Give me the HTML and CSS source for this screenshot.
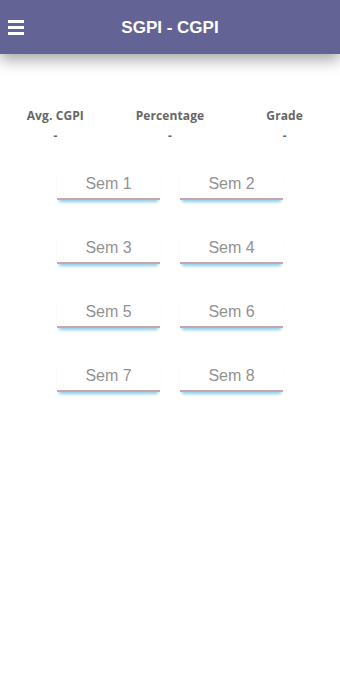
FILE: index.html
```html
<!DOCTYPE html>
<html>
<head>
<meta charset="utf-8">
<link rel="stylesheet" href="styles.css">
</head>
<body>
<header class="bar">
  <div class="menu">
    <svg width="16" height="17" viewBox="0 0 16 17">
      <rect x="0" y="1" width="16" height="3" fill="#fff"/>
      <rect x="0" y="7" width="16" height="3" fill="#fff"/>
      <rect x="0" y="13" width="16" height="3" fill="#fff"/>
    </svg>
  </div>
  <div class="title">SGPI - CGPI</div>
</header>
<section class="stats">
  <div class="stat"><div class="label">Avg. CGPI</div><div class="val">-</div></div>
  <div class="stat"><div class="label">Percentage</div><div class="val">-</div></div>
  <div class="stat"><div class="label">Grade</div><div class="val">-</div></div>
</section>
<section class="grid">
  <button class="sem">Sem 1</button>
  <button class="sem">Sem 2</button>
  <button class="sem">Sem 3</button>
  <button class="sem">Sem 4</button>
  <button class="sem">Sem 5</button>
  <button class="sem">Sem 6</button>
  <button class="sem">Sem 7</button>
  <button class="sem">Sem 8</button>
</section>
</body>
</html>
```
FILE: styles.css
```css
html, body { margin: 0; padding: 0; background: #fff; }
body { font-family: "Liberation Sans", Arial, sans-serif; width: 340px; height: 680px; overflow: hidden; }
.bar {
  height: 54px;
  background: #646395;
  display: flex;
  align-items: center;
  position: relative;
  box-shadow: 0 6px 14px rgba(0,0,0,0.35);
}
.menu { width: 16px; height: 17px; margin-left: 8px; margin-top: 1px; }
.menu svg { display: block; }
.title {
  position: absolute;
  left: 0; right: 0;
  text-align: center;
  color: #fff;
  font-weight: bold;
  font-size: 17px;
  top: 18px;
}
.stats {
  display: grid;
  grid-template-columns: repeat(3, 1fr);
  padding-top: 54px;
  margin: 0 -2px;
}
.stat { text-align: center; color: #666; }
.label { font-family: "Open Sans", sans-serif; font-weight: 700; font-size: 12px; line-height: 15px; letter-spacing: 0.1px; }
.val { font-family: "Open Sans", sans-serif; font-weight: 700; font-size: 12px; line-height: 12px; margin-top: 7px; }
.grid {
  display: grid;
  grid-template-columns: 103px 103px;
  column-gap: 20px;
  row-gap: 34px;
  justify-content: center;
  padding-top: 28px;
}
.sem {
  height: 30px;
  border: 0;
  border-bottom: 2px solid #caa6ac;
  background: #fff;
  box-shadow: 0 4px 3px -2px rgba(120, 195, 230, 0.85);
  color: #929292;
  font-family: "Liberation Sans", Arial, sans-serif;
  font-size: 16px;
  padding: 0;
}
```
